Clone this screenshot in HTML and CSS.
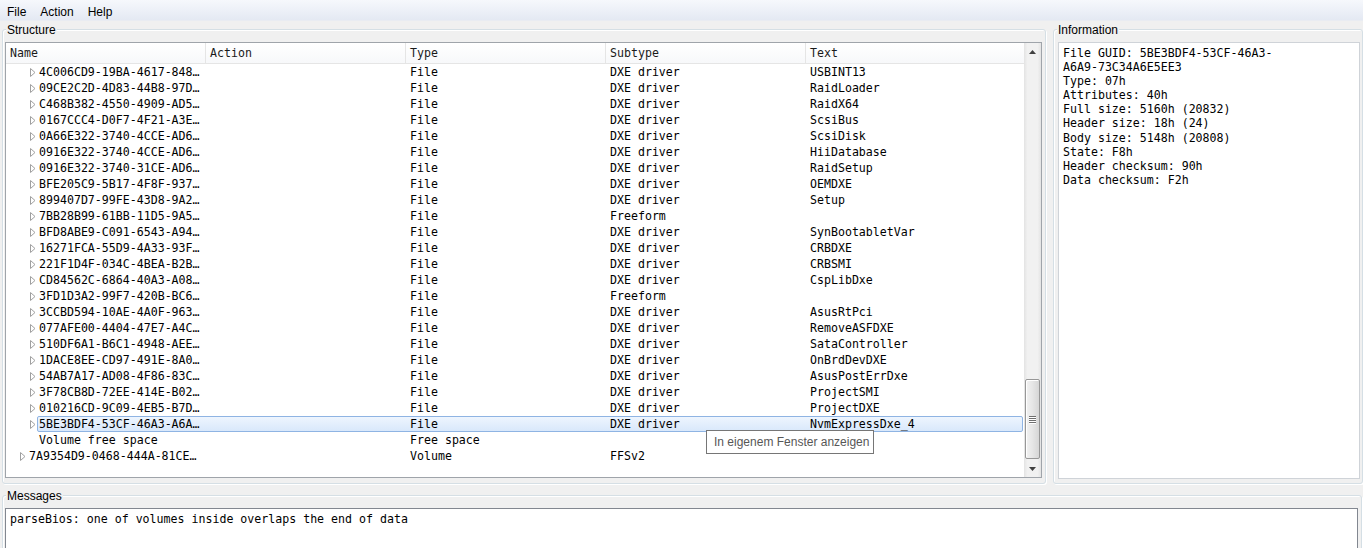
FILE: index.html
```html
<!DOCTYPE html>
<html>
<head>
<meta charset="utf-8">
<link rel="stylesheet" href="styles.css">
</head>
<body>
<div class="menubar">
  <span class="menu-item">File</span>
  <span class="menu-item">Action</span>
  <span class="menu-item">Help</span>
</div>

<div class="main">
  <div class="group structure">
    <span class="group-title">Structure</span>
    <div class="tree">
      <div class="tree-main">
        <div class="header">
          <div class="hcell">Name</div>
          <div class="hcell">Action</div>
          <div class="hcell">Type</div>
          <div class="hcell">Subtype</div>
          <div class="hcell">Text</div>
        </div>
        <div class="rows">
          <div class="row l2"><div class="gutter"><svg class="arrow" width="6" height="9" viewBox="0 0 6 9"><path d="M0.5 0.5L5 4.5L0.5 8.5Z"/></svg></div><div class="cells"><span class="c name">4C006CD9-19BA-4617-848…</span><span class="c"></span><span class="c">File</span><span class="c">DXE driver</span><span class="c">USBINT13</span></div></div>
          <div class="row l2"><div class="gutter"><svg class="arrow" width="6" height="9" viewBox="0 0 6 9"><path d="M0.5 0.5L5 4.5L0.5 8.5Z"/></svg></div><div class="cells"><span class="c name">09CE2C2D-4D83-44B8-97D…</span><span class="c"></span><span class="c">File</span><span class="c">DXE driver</span><span class="c">RaidLoader</span></div></div>
          <div class="row l2"><div class="gutter"><svg class="arrow" width="6" height="9" viewBox="0 0 6 9"><path d="M0.5 0.5L5 4.5L0.5 8.5Z"/></svg></div><div class="cells"><span class="c name">C468B382-4550-4909-AD5…</span><span class="c"></span><span class="c">File</span><span class="c">DXE driver</span><span class="c">RaidX64</span></div></div>
          <div class="row l2"><div class="gutter"><svg class="arrow" width="6" height="9" viewBox="0 0 6 9"><path d="M0.5 0.5L5 4.5L0.5 8.5Z"/></svg></div><div class="cells"><span class="c name">0167CCC4-D0F7-4F21-A3E…</span><span class="c"></span><span class="c">File</span><span class="c">DXE driver</span><span class="c">ScsiBus</span></div></div>
          <div class="row l2"><div class="gutter"><svg class="arrow" width="6" height="9" viewBox="0 0 6 9"><path d="M0.5 0.5L5 4.5L0.5 8.5Z"/></svg></div><div class="cells"><span class="c name">0A66E322-3740-4CCE-AD6…</span><span class="c"></span><span class="c">File</span><span class="c">DXE driver</span><span class="c">ScsiDisk</span></div></div>
          <div class="row l2"><div class="gutter"><svg class="arrow" width="6" height="9" viewBox="0 0 6 9"><path d="M0.5 0.5L5 4.5L0.5 8.5Z"/></svg></div><div class="cells"><span class="c name">0916E322-3740-4CCE-AD6…</span><span class="c"></span><span class="c">File</span><span class="c">DXE driver</span><span class="c">HiiDatabase</span></div></div>
          <div class="row l2"><div class="gutter"><svg class="arrow" width="6" height="9" viewBox="0 0 6 9"><path d="M0.5 0.5L5 4.5L0.5 8.5Z"/></svg></div><div class="cells"><span class="c name">0916E322-3740-31CE-AD6…</span><span class="c"></span><span class="c">File</span><span class="c">DXE driver</span><span class="c">RaidSetup</span></div></div>
          <div class="row l2"><div class="gutter"><svg class="arrow" width="6" height="9" viewBox="0 0 6 9"><path d="M0.5 0.5L5 4.5L0.5 8.5Z"/></svg></div><div class="cells"><span class="c name">BFE205C9-5B17-4F8F-937…</span><span class="c"></span><span class="c">File</span><span class="c">DXE driver</span><span class="c">OEMDXE</span></div></div>
          <div class="row l2"><div class="gutter"><svg class="arrow" width="6" height="9" viewBox="0 0 6 9"><path d="M0.5 0.5L5 4.5L0.5 8.5Z"/></svg></div><div class="cells"><span class="c name">899407D7-99FE-43D8-9A2…</span><span class="c"></span><span class="c">File</span><span class="c">DXE driver</span><span class="c">Setup</span></div></div>
          <div class="row l2"><div class="gutter"><svg class="arrow" width="6" height="9" viewBox="0 0 6 9"><path d="M0.5 0.5L5 4.5L0.5 8.5Z"/></svg></div><div class="cells"><span class="c name">7BB28B99-61BB-11D5-9A5…</span><span class="c"></span><span class="c">File</span><span class="c">Freeform</span><span class="c"></span></div></div>
          <div class="row l2"><div class="gutter"><svg class="arrow" width="6" height="9" viewBox="0 0 6 9"><path d="M0.5 0.5L5 4.5L0.5 8.5Z"/></svg></div><div class="cells"><span class="c name">BFD8ABE9-C091-6543-A94…</span><span class="c"></span><span class="c">File</span><span class="c">DXE driver</span><span class="c">SynBootabletVar</span></div></div>
          <div class="row l2"><div class="gutter"><svg class="arrow" width="6" height="9" viewBox="0 0 6 9"><path d="M0.5 0.5L5 4.5L0.5 8.5Z"/></svg></div><div class="cells"><span class="c name">16271FCA-55D9-4A33-93F…</span><span class="c"></span><span class="c">File</span><span class="c">DXE driver</span><span class="c">CRBDXE</span></div></div>
          <div class="row l2"><div class="gutter"><svg class="arrow" width="6" height="9" viewBox="0 0 6 9"><path d="M0.5 0.5L5 4.5L0.5 8.5Z"/></svg></div><div class="cells"><span class="c name">221F1D4F-034C-4BEA-B2B…</span><span class="c"></span><span class="c">File</span><span class="c">DXE driver</span><span class="c">CRBSMI</span></div></div>
          <div class="row l2"><div class="gutter"><svg class="arrow" width="6" height="9" viewBox="0 0 6 9"><path d="M0.5 0.5L5 4.5L0.5 8.5Z"/></svg></div><div class="cells"><span class="c name">CD84562C-6864-40A3-A08…</span><span class="c"></span><span class="c">File</span><span class="c">DXE driver</span><span class="c">CspLibDxe</span></div></div>
          <div class="row l2"><div class="gutter"><svg class="arrow" width="6" height="9" viewBox="0 0 6 9"><path d="M0.5 0.5L5 4.5L0.5 8.5Z"/></svg></div><div class="cells"><span class="c name">3FD1D3A2-99F7-420B-BC6…</span><span class="c"></span><span class="c">File</span><span class="c">Freeform</span><span class="c"></span></div></div>
          <div class="row l2"><div class="gutter"><svg class="arrow" width="6" height="9" viewBox="0 0 6 9"><path d="M0.5 0.5L5 4.5L0.5 8.5Z"/></svg></div><div class="cells"><span class="c name">3CCBD594-10AE-4A0F-963…</span><span class="c"></span><span class="c">File</span><span class="c">DXE driver</span><span class="c">AsusRtPci</span></div></div>
          <div class="row l2"><div class="gutter"><svg class="arrow" width="6" height="9" viewBox="0 0 6 9"><path d="M0.5 0.5L5 4.5L0.5 8.5Z"/></svg></div><div class="cells"><span class="c name">077AFE00-4404-47E7-A4C…</span><span class="c"></span><span class="c">File</span><span class="c">DXE driver</span><span class="c">RemoveASFDXE</span></div></div>
          <div class="row l2"><div class="gutter"><svg class="arrow" width="6" height="9" viewBox="0 0 6 9"><path d="M0.5 0.5L5 4.5L0.5 8.5Z"/></svg></div><div class="cells"><span class="c name">510DF6A1-B6C1-4948-AEE…</span><span class="c"></span><span class="c">File</span><span class="c">DXE driver</span><span class="c">SataController</span></div></div>
          <div class="row l2"><div class="gutter"><svg class="arrow" width="6" height="9" viewBox="0 0 6 9"><path d="M0.5 0.5L5 4.5L0.5 8.5Z"/></svg></div><div class="cells"><span class="c name">1DACE8EE-CD97-491E-8A0…</span><span class="c"></span><span class="c">File</span><span class="c">DXE driver</span><span class="c">OnBrdDevDXE</span></div></div>
          <div class="row l2"><div class="gutter"><svg class="arrow" width="6" height="9" viewBox="0 0 6 9"><path d="M0.5 0.5L5 4.5L0.5 8.5Z"/></svg></div><div class="cells"><span class="c name">54AB7A17-AD08-4F86-83C…</span><span class="c"></span><span class="c">File</span><span class="c">DXE driver</span><span class="c">AsusPostErrDxe</span></div></div>
          <div class="row l2"><div class="gutter"><svg class="arrow" width="6" height="9" viewBox="0 0 6 9"><path d="M0.5 0.5L5 4.5L0.5 8.5Z"/></svg></div><div class="cells"><span class="c name">3F78CB8D-72EE-414E-B02…</span><span class="c"></span><span class="c">File</span><span class="c">DXE driver</span><span class="c">ProjectSMI</span></div></div>
          <div class="row l2"><div class="gutter"><svg class="arrow" width="6" height="9" viewBox="0 0 6 9"><path d="M0.5 0.5L5 4.5L0.5 8.5Z"/></svg></div><div class="cells"><span class="c name">010216CD-9C09-4EB5-B7D…</span><span class="c"></span><span class="c">File</span><span class="c">DXE driver</span><span class="c">ProjectDXE</span></div></div>
          <div class="row l2 selected"><div class="gutter"><svg class="arrow" width="6" height="9" viewBox="0 0 6 9"><path d="M0.5 0.5L5 4.5L0.5 8.5Z"/></svg></div><div class="cells"><span class="c name">5BE3BDF4-53CF-46A3-A6A…</span><span class="c"></span><span class="c">File</span><span class="c">DXE driver</span><span class="c">NvmExpressDxe_4</span></div></div>
          <div class="row l2"><div class="gutter"></div><div class="cells"><span class="c name">Volume free space</span><span class="c"></span><span class="c">Free space</span><span class="c"></span><span class="c"></span></div></div>
          <div class="row l1"><div class="gutter"><svg class="arrow" width="6" height="9" viewBox="0 0 6 9"><path d="M0.5 0.5L5 4.5L0.5 8.5Z"/></svg></div><div class="cells"><span class="c name">7A9354D9-0468-444A-81CE…</span><span class="c"></span><span class="c">Volume</span><span class="c">FFSv2</span><span class="c"></span></div></div>
        </div>
      </div>
      <div class="vscroll">
        <div class="sbtn"><svg width="7" height="4" viewBox="0 0 7 4"><path d="M3.5 0L7 4H0Z"/></svg></div>
        <div class="track">
          <div class="thumb">
            <div class="grip"><i></i><i></i><i></i><i></i></div>
          </div>
        </div>
        <div class="sbtn"><svg width="7" height="4" viewBox="0 0 7 4"><path d="M0 0H7L3.5 4Z"/></svg></div>
      </div>
    </div>
  </div>

  <div class="group info">
    <span class="group-title">Information</span>
    <div class="infobox">File GUID: 5BE3BDF4-53CF-46A3-<br>A6A9-73C34A6E5EE3<br>Type: 07h<br>Attributes: 40h<br>Full size: 5160h (20832)<br>Header size: 18h (24)<br>Body size: 5148h (20808)<br>State: F8h<br>Header checksum: 90h<br>Data checksum: F2h</div>
  </div>
</div>

<div class="group messages">
  <span class="group-title">Messages</span>
  <div class="msgbox">parseBios: one of volumes inside overlaps the end of data</div>
</div>

<div class="tooltip">In eigenem Fenster anzeigen</div>
</body>
</html>
```

FILE: styles.css
```css
html, body {
  margin: 0;
  padding: 0;
  width: 1363px;
  height: 548px;
  overflow: hidden;
}
body {
  background: #f0f0f0;
  font-family: "Liberation Sans", Arial, sans-serif;
  font-size: 12px;
  color: #000;
  position: relative;
}
.menubar {
  height: 20px;
  border-bottom: 1px solid #e9ecf2;
  background: linear-gradient(#f6f8fc, #e4e9f3);
  display: flex;
  align-items: flex-start;
  box-sizing: content-box;
}
.menu-item {
  padding: 4px 7px 0 7px;
  line-height: 16px;
  color: #000;
}
.main {
  display: flex;
  gap: 7px;
  margin: 8px 0 0 2px;
}
.group {
  position: relative;
  border: 1px solid #d5dfe5;
  border-radius: 3px;
  box-shadow: inset 1px 1px 0 #fff, 1px 1px 0 #fff;
}
.group-title {
  position: absolute;
  top: -7px;
  left: 3px;
  padding: 0 1px;
  line-height: 15px;
  background: #f0f0f0;
  color: #000;
}
.structure {
  width: 1037px;
  height: 436px;
  padding: 12px 3px 5px 2px;
  flex: none;
}
.info {
  width: 302px;
  height: 436px;
  padding: 12px 2px 5px 4px;
  flex: none;
}
.tree {
  display: flex;
  height: 434px;
  border: 1px solid #9fa4aa;
  background: #fff;
}
.tree-main {
  flex: 1;
  display: flex;
  flex-direction: column;
  font-family: "DejaVu Sans Mono", "Liberation Mono", monospace;
  font-size: 11.6px;
  min-width: 0;
}
.header {
  display: grid;
  grid-template-columns: 200px 200px 200px 200px 1fr;
  height: 20px;
  border-bottom: 1px solid #e5e5e5;
  background: linear-gradient(#ffffff, #f7f8fa);
}
.hcell {
  padding: 1px 0 0 4px;
  line-height: 19px;
  border-right: 1px solid #e5e5e5;
  color: #1a1a1a;
}
.hcell:last-child { border-right: none; }
.row {
  display: flex;
  height: 16px;
}
.gutter {
  display: flex;
  justify-content: flex-end;
  align-items: center;
  flex: none;
}
.l2 .gutter { width: 31px; }
.l1 .gutter { width: 21px; }
.arrow {
  margin-right: 1px;
  display: block;
}
.arrow path {
  fill: #fff;
  stroke: #a0a0a0;
  stroke-width: 1;
}
.cells {
  flex: 1;
  display: grid;
  border: 1px solid transparent;
  border-radius: 2px;
  min-width: 0;
  margin-right: 1px;
}
.l2 .cells { grid-template-columns: 168px 200px 200px 200px 1fr; }
.l1 .cells { grid-template-columns: 178px 200px 200px 200px 1fr; }
.c {
  padding: 1px 0 0 4px;
  line-height: 13px;
  white-space: nowrap;
  overflow: hidden;
}
.c.name { padding-left: 1px; }
.selected .cells {
  border-color: #8fb4e3;
  background: linear-gradient(#eef5fe, #d9e8fb);
}
.vscroll {
  width: 17px;
  flex: none;
  display: flex;
  flex-direction: column;
  background: linear-gradient(90deg, #e3e3e3, #f1f1f1 20%, #f1f1f1 80%, #e3e3e3);
}
.sbtn {
  height: 17px;
  display: flex;
  align-items: center;
  justify-content: center;
  flex: none;
}
.sbtn svg path { fill: #404040; }
.track {
  flex: 1;
  padding: 319px 1px 0 1px;
}
.thumb {
  height: 78px;
  border: 1px solid #979797;
  border-radius: 2px;
  background: linear-gradient(90deg, #f2f2f2, #e6e6e6 50%, #d6d6d6);
  box-shadow: inset 1px 1px 0 #fff;
  display: flex;
  align-items: center;
  justify-content: center;
}
.grip {
  display: flex;
  flex-direction: column;
  gap: 1px;
}
.grip i {
  display: block;
  width: 7px;
  height: 1px;
  background: #6e6e6e;
  box-shadow: 0 1px 0 #fff;
}
.infobox {
  height: 432px;
  border: 1px solid #cfd3d8;
  background: #fff;
  padding: 3px 0 0 4px;
  font-family: "DejaVu Sans Mono", "Liberation Mono", monospace;
  font-size: 11.6px;
  line-height: 14.1px;
  white-space: nowrap;
}
.messages {
  margin: 11px 0 0 2px;
  width: 1353px;
  height: 60px;
  padding: 12px 3px 0 2px;
}
.msgbox {
  height: 60px;
  border: 1px solid #828790;
  background: #fff;
  padding: 3px 0 0 4px;
  font-family: "DejaVu Sans Mono", "Liberation Mono", monospace;
  font-size: 11.6px;
  line-height: 14px;
}
.tooltip {
  position: absolute;
  left: 706px;
  top: 430px;
  width: 159px;
  height: 22px;
  padding-left: 7px;
  border: 1px solid #767676;
  background: #fff;
  color: #575757;
  line-height: 22px;
  font-size: 12px;
}
```
